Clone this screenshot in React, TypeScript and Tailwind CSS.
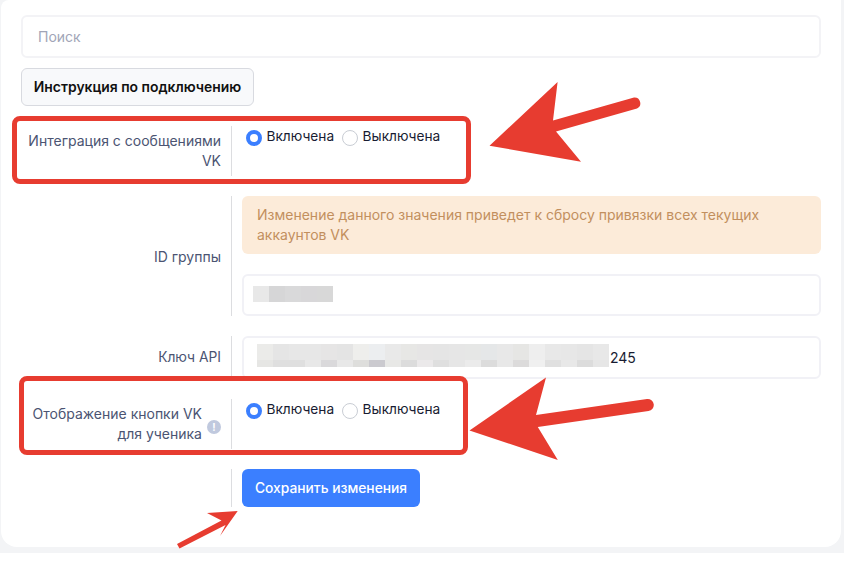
const topCells = [
  "bg-[#ebebe9]", "bg-[#e5e5e5]", "bg-[#e7e7e7]", "bg-[#e7e7e7]", "bg-[#e6e5e5]", "bg-[#e4e4e4]", "bg-[#eeeeec]", "bg-[#eceef0]",
  "bg-[#e9e9e9]", "bg-[#e7e7e5]", "bg-[#e6e5e5]", "bg-[#e5e5e5]", "bg-[#e6e6e6]", "bg-[#e6e7e6]", "bg-[#e5e7e8]", "bg-[#e8e8e8]",
  "bg-[#e6e6e4]", "bg-[#eeeeee]", "bg-[#e8e8e8]", "bg-[#e7e7e7]", "bg-[#e5e5e5]", "bg-[#e8e8e8]",
];
const bottomCells = [
  "bg-[#e6e6e4]", "bg-[#dfdfdf]", "bg-[#dfdfdf]", "bg-[#e8e8e8]", "bg-[#dad9db]", "bg-[#e8e8e8]", "bg-[#dededc]", "bg-[#cbcacf]",
  "bg-[#e8e8e6]", "bg-[#dcdcdc]", "bg-[#ebe9ea]", "bg-[#dfdfdf]", "bg-[#e6e6e6]", "bg-[#ebebeb]", "bg-[#dcdcdc]", "bg-[#e8e8e8]",
  "bg-[#dcdbdb]", "bg-[#f0f0f0]", "bg-[#e0e0e0]", "bg-[#e8e8e8]", "bg-[#dcdcdc]", "bg-[#e6e6e6]",
];
const idCells = ["bg-[#e8e8e8]", "bg-[#d6d6d7]", "bg-[#d9d9da]", "bg-[#d8d7d9]", "bg-[#d8d8d8]"];

function Radio({ checked, label }: { checked?: boolean; label: string }) {
  return (
    <div className="flex items-start">
      {checked ? (
        <span className="w-4 h-4 rounded-full border-[4px] border-[#3b7fff] bg-white" />
      ) : (
        <span className="w-4 h-4 rounded-full border border-[#c9cdd4] bg-white" />
      )}
      <span className="ml-[4.5px] -mt-[4px] text-[13.7px] leading-5 text-[#181c32]">{label}</span>
    </div>
  );
}

function Toggle() {
  return (
    <div className="flex gap-2 pl-[14px] pt-[4px]">
      <Radio checked label="Включена" />
      <Radio label="Выключена" />
    </div>
  );
}

function Input({ children, h }: { children?: React.ReactNode; h: string }) {
  return <div className={`${h} w-[579px] rounded-md border-2 border-[#f1f1f6] bg-white`}>{children}</div>;
}

export default function App() {
  return (
    <div className="relative w-[844px] h-[567px] overflow-hidden bg-white font-['Inter',sans-serif]">
      <div className="h-[553px] bg-[#f3f4f6] pl-px pr-[3px]">
        <div className="h-[547px] rounded-b-2xl rounded-tl-lg bg-white px-5 pt-[15px]">
          <div className="h-[43px] w-[800px] rounded-md border-2 border-[#f3f3f6] bg-white pl-[15px] flex text-[14px] leading-[39px] text-[#a1a5b7]">
            Поиск
          </div>
          <button className="mt-[10px] block h-[38px] w-[233px] rounded-md border border-[#d8dae0] bg-[#f8f9fb] text-[13.9px] font-semibold text-[#111111]">
            Инструкция по подключению
          </button>

          <div className="mt-[20px] flex h-[50px]">
            <div className="w-[200px] pt-[5px] text-right text-[14px] leading-5 text-[#4b5472]">
              Интеграция с сообщениями<br />VK
            </div>
            <div className="ml-[10px] border-l border-[#dcdde0]" />
            <Toggle />
          </div>

          <div className="mt-[20px] flex h-[120px]">
            <div className="w-[200px] flex items-center justify-end text-[14px] text-[#4b5472]">ID группы</div>
            <div className="ml-[10px] border-l border-[#dcdde0]" />
            <div className="ml-[10px]">
              <div className="h-[58px] w-[579px] rounded-md bg-[#fcebd9] px-[15px] py-[9px] text-[14px] leading-5 text-[#c28f5e]">
                Изменение данного значения приведет к сбросу привязки всех текущих аккаунтов VK
              </div>
              <div className="mt-[20px]">
                <Input h="h-[42px]">
                  <div className="ml-[9px] mt-[10px] flex">
                    {idCells.map((c, i) => (
                      <span key={i} className={`h-4 w-4 ${c}`} />
                    ))}
                  </div>
                </Input>
              </div>
            </div>
          </div>

          <div className="mt-[20px] flex h-[43px]">
            <div className="w-[200px] pl-px flex items-center justify-end text-[13.8px] text-[#4b5472]">Ключ API</div>
            <div className="ml-[10px] border-l border-[#dcdde0]" />
            <div className="ml-[10px]">
              <Input h="h-[43px]">
                <div className="ml-[13px] mt-[6px] flex">
                  <div>
                    <div className="flex">
                      {topCells.map((c, i) => (
                        <span key={i} className={`h-4 w-4 ${c}`} />
                      ))}
                    </div>
                    <div className="flex">
                      {bottomCells.map((c, i) => (
                        <span key={i} className={`h-[7px] w-4 ${c}`} />
                      ))}
                    </div>
                  </div>
                  <span className="ml-px mt-[4px] text-[14px] leading-5 text-[#181c32]">245</span>
                </div>
              </Input>
            </div>
          </div>

          <div className="mt-[20px] flex h-[50px]">
            <div className="w-[200px] flex items-center justify-end">
              <div className="text-right text-[14px] leading-5 text-[#4b5472]">
                Отображение кнопки VK<br />для ученика
              </div>
              <span className="ml-[5px] mt-[5px] mr-0 flex h-[14px] w-[14px] shrink-0 items-center justify-center rounded-full bg-[#c0c9de] text-[10px] font-bold leading-none text-white">
                !
              </span>
            </div>
            <div className="ml-[10px] border-l border-[#dcdde0]" />
            <Toggle />
          </div>

          <div className="mt-[20px] flex h-[38px]">
            <div className="w-[200px]" />
            <div className="ml-[10px] border-l border-[#dcdde0]" />
            <button className="ml-[10px] h-[38px] w-[178px] rounded-md bg-[#3b7fff] text-[13.8px] font-medium text-white">
              Сохранить изменения
            </button>
          </div>
        </div>
      </div>

      {/* annotations */}
      <div className="absolute left-[12px] top-[116px] h-[68px] w-[459px] rounded-lg border-[5px] border-[#e73c30]" />
      <div className="absolute left-[19px] top-[376px] h-[79px] w-[449px] rounded-lg border-[5px] border-[#e73c30]" />
      <svg className="absolute left-0 top-0" width="844" height="567" viewBox="0 0 844 567" fill="none">
        <path d="M489.5 145.7 L557.6 82 L553 120.5 L634 97.5 A5.8 5.8 0 0 1 637 108.5 L556 131.6 L581 161.7 Z" fill="#e73c30" />
        <path d="M469.5 430.5 L546 377.5 L536 415 L647 399 A6 6 0 0 1 648.5 411 L537.8 427 L557.8 460 Z" fill="#e73c30" />
        <path d="M237.7 511 L207 513 L221.5 520.5 L177 544 L179.5 548.5 L225.5 525 L220 536 Z" fill="#e73c30" />
      </svg>
    </div>
  );
}
